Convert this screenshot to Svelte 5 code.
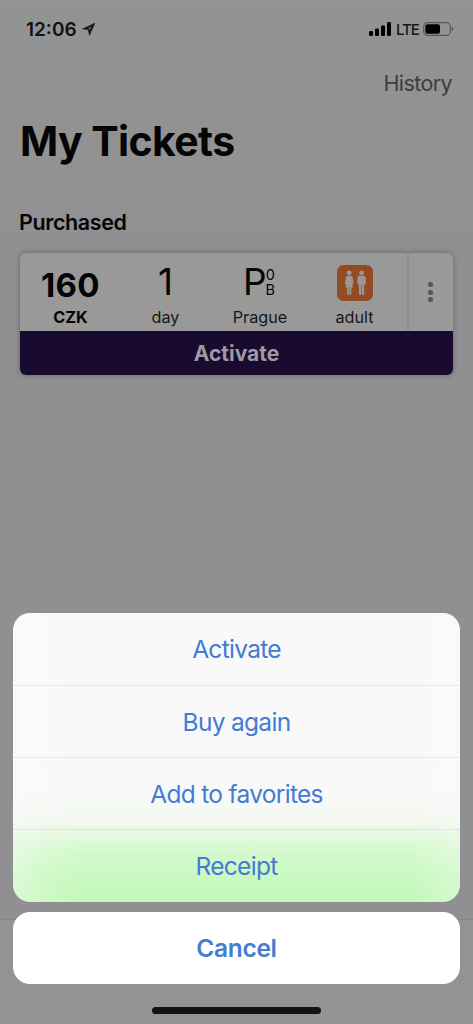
<script>
    let actions = ["Activate", "Buy again", "Add to favorites", "Receipt"];
    let sheetOpen = true;

    function openSheet() {
        sheetOpen = true;
    }

    function closeSheet() {
        sheetOpen = false;
    }
</script>

<div class="screen">
    <div class="status-bar">
        <div class="clock">
            <span class="time">12:06</span>
            <svg class="location" viewBox="0 0 14 14">
                <path
                    d="M13 1 L0.4 6.9 L6.2 7.7 L7.4 13.4 Z M9.6 4.4 L7.7 8.6 L7.2 6.7 L5.6 6.3 Z"
                    fill="#151515"
                    stroke="#151515"
                    stroke-width="0.4"
                    fill-rule="evenodd"
                />
            </svg>
        </div>
        <div class="signals">
            <svg class="bars" viewBox="0 0 22 14">
                <rect x="0" y="9" width="4" height="5" rx="1.2" />
                <rect x="6" y="6.5" width="4" height="7.5" rx="1.2" />
                <rect x="12" y="3.5" width="4" height="10.5" rx="1.2" />
                <rect x="18" y="0" width="4" height="14" rx="1.2" />
            </svg>
            <span class="network">LTE</span>
            <svg class="battery" viewBox="0 0 31 14">
                <rect
                    x="0.7"
                    y="0.7"
                    width="26.6"
                    height="12.6"
                    rx="3.8"
                    fill="none"
                    stroke="#555557"
                    stroke-width="1.2"
                />
                <rect x="2.4" y="2.3" width="14.6" height="9.4" rx="2" />
                <path d="M28.8 4.8 Q30.4 5.4 30.4 7 Q30.4 8.6 28.8 9.2 Z" fill="#555557" />
            </svg>
        </div>
    </div>

    <div class="nav"><button class="history">History</button></div>
    <h1>My Tickets</h1>
    <h2>Purchased</h2>

    <div class="ticket">
        <div class="details">
            <div class="cell price">
                <div class="value">160</div>
                <div class="label">CZK</div>
            </div>
            <div class="cell">
                <div class="value">1</div>
                <div class="label">day</div>
            </div>
            <div class="cell">
                <div class="value zone">
                    <span>P</span>
                    <span class="zones"><span>0</span><span>B</span></span>
                </div>
                <div class="label">Prague</div>
            </div>
            <div class="cell">
                <div class="value">
                    <svg class="adult" viewBox="0 0 36 36">
                        <rect width="36" height="36" rx="6.5" fill="#924b22" />
                        <g fill="#9c9794">
                            <circle cx="12.2" cy="7.8" r="2.4" />
                            <path
                                d="M10.6 10.8 H13.8 Q15.2 10.8 15.6 12.4 L16.6 18.6 Q16 19.7 15.2 18.8 L14.3 15.2 L16 22.6 H14.3 V29.8 H12.5 V22.6 H11.9 V29.8 H10.1 V22.6 H8.4 L10.1 15.2 L9.2 18.8 Q8.4 19.7 7.8 18.6 L8.8 12.4 Q9.2 10.8 10.6 10.8 Z"
                            />
                            <circle cx="24.6" cy="7.8" r="2.4" />
                            <path
                                d="M22.5 10.8 H26.7 Q28.8 10.8 28.8 12.8 V19 Q28 20.3 27.2 19 V14 V29.8 H24.9 V20.5 H24.3 V29.8 H22 V14 V19 Q21.2 20.3 20.4 19 V12.8 Q20.4 10.8 22.5 10.8 Z"
                            />
                        </g>
                    </svg>
                </div>
                <div class="label">adult</div>
            </div>
            <button class="more" aria-label="More" on:click={openSheet}>
                <i></i><i></i><i></i>
            </button>
        </div>
        <button class="activate">Activate</button>
    </div>

    <div class="tab-bar"></div>

    {#if sheetOpen}
        <div class="sheet">
            <div class="actions">
                {#each actions as action}
                    <button>{action}</button>
                {/each}
            </div>
            <button class="cancel" on:click={closeSheet}>Cancel</button>
        </div>
    {/if}
    <div class="home-indicator"></div>
</div>

<style>
    :global(body) {
        margin: 0;
    }

    .screen {
        position: relative;
        box-sizing: border-box;
        width: 473px;
        height: 1024px;
        overflow: hidden;
        display: flex;
        flex-direction: column;
        background: linear-gradient(#919493 0, #929293 50px, #929294 190px, #909093 240px);
        font-family: Inter, "Liberation Sans", sans-serif;
        color: #050506;
    }

    button {
        margin: 0;
        padding: 0;
        border: none;
        background: none;
        font: inherit;
        letter-spacing: inherit;
        color: inherit;
    }

    svg {
        display: block;
    }

    .status-bar {
        display: flex;
        justify-content: space-between;
        height: 58px;
        box-sizing: border-box;
        padding: 17px 19px 0 26px;
    }

    .clock,
    .signals {
        display: flex;
        align-items: center;
        height: 24px;
    }

    .time {
        width: 56px;
        font-size: 19px;
        font-weight: 600;
        color: #111;
    }

    .location {
        width: 14px;
        height: 14px;
    }

    .bars {
        width: 22px;
        height: 14px;
    }

    .network {
        width: 27px;
        margin-left: 5px;
        font-size: 15px;
        font-weight: 500;
        letter-spacing: -1px;
        color: #161616;
    }

    .battery {
        width: 31px;
        height: 14px;
    }

    .nav {
        display: flex;
        justify-content: flex-end;
        height: 50px;
        padding-right: 21px;
    }

    .history {
        height: 50px;
        font-size: 21.5px;
        letter-spacing: -0.6px;
        color: #3d3d3f;
    }

    h1 {
        margin: 7px 0 0 20px;
        font-size: 41px;
        line-height: 53px;
        font-weight: 700;
        letter-spacing: -0.6px;
    }

    h2 {
        margin: 39px 0 0 19px;
        font-size: 21.5px;
        line-height: 30px;
        font-weight: 600;
        letter-spacing: -0.4px;
    }

    .ticket {
        display: flex;
        flex-direction: column;
        width: 433px;
        height: 122px;
        margin: 16px 0 0 20px;
        border-radius: 6px;
        overflow: hidden;
        background: #999;
        box-shadow: 0 0 5px rgba(40, 40, 45, 0.45);
    }

    .details {
        display: grid;
        grid-template-columns: 98px 95px 94px 100px 1fr;
        height: 78px;
    }

    .cell {
        text-align: center;
    }

    .cell:nth-child(4) {
        padding-right: 5px;
    }

    .cell .value {
        display: flex;
        justify-content: center;
        height: 51px;
        padding-top: 11px;
        box-sizing: border-box;
        font-size: 37px;
        line-height: 36px;
        font-weight: 400;
    }

    .price .value {
        padding: 14px 0 0 3px;
        font-size: 33px;
        font-weight: 700;
        letter-spacing: 0.3px;
    }

    .label {
        font-size: 16.2px;
        line-height: 26px;
        color: #171719;
    }

    .price .label {
        padding-left: 3px;
        font-weight: 700;
        color: #050506;
    }

    .cell .zone {
        padding-right: 3px;
        letter-spacing: -1px;
    }

    .zones {
        display: flex;
        flex-direction: column;
        padding-top: 3px;
        font-size: 14.5px;
        line-height: 15px;
    }

    .adult {
        width: 36px;
        height: 36px;
        margin-top: 1px;
    }

    .more {
        display: flex;
        flex-direction: column;
        align-items: center;
        justify-content: center;
        gap: 2.6px;
        padding-right: 2px;
        border-left: 2px solid #8c8c8d;
    }

    .more i {
        width: 5px;
        height: 5px;
        border-radius: 50%;
        background: #555557;
    }

    .activate {
        height: 44px;
        background: #190b30;
        font-size: 21px;
        font-weight: 700;
        letter-spacing: 0;
        color: #9d9aa2;
    }

    .tab-bar {
        height: 104px;
        margin-top: auto;
        border-top: 1px solid #858587;
        background: #939393;
    }

    .sheet {
        position: absolute;
        left: 13px;
        right: 13px;
        bottom: 40.5px;
        font-size: 24.5px;
        letter-spacing: -0.7px;
        color: #437bd5;
    }

    .actions {
        display: grid;
        grid-template-rows: repeat(4, 1fr);
        height: 288.5px;
        border-radius: 17px;
        overflow: hidden;
        background:
            linear-gradient(90deg, rgba(249, 250, 249, 0.45), rgba(249, 250, 249, 0.15) 30px, rgba(249, 250, 249, 0) 65px, rgba(249, 250, 249, 0) 400px, rgba(249, 250, 249, 0.3)),
            linear-gradient(#f9f9f9 180px, #f2f8f0 208px, #e4f9df 222px, #d3f9cb 242px, #c8f9c0 265px, #c5f8bb);
    }

    .actions button + button {
        border-top: 1px solid rgba(60, 80, 70, 0.1);
    }

    .cancel {
        width: 100%;
        height: 72px;
        margin-top: 10px;
        border-radius: 17px;
        background: #fff;
        font-weight: 600;
        letter-spacing: -0.3px;
        display: block;
    }

    .home-indicator {
        position: absolute;
        left: 152px;
        bottom: 10px;
        width: 169px;
        height: 7px;
        border-radius: 4px;
        background: #131313;
    }
</style>
